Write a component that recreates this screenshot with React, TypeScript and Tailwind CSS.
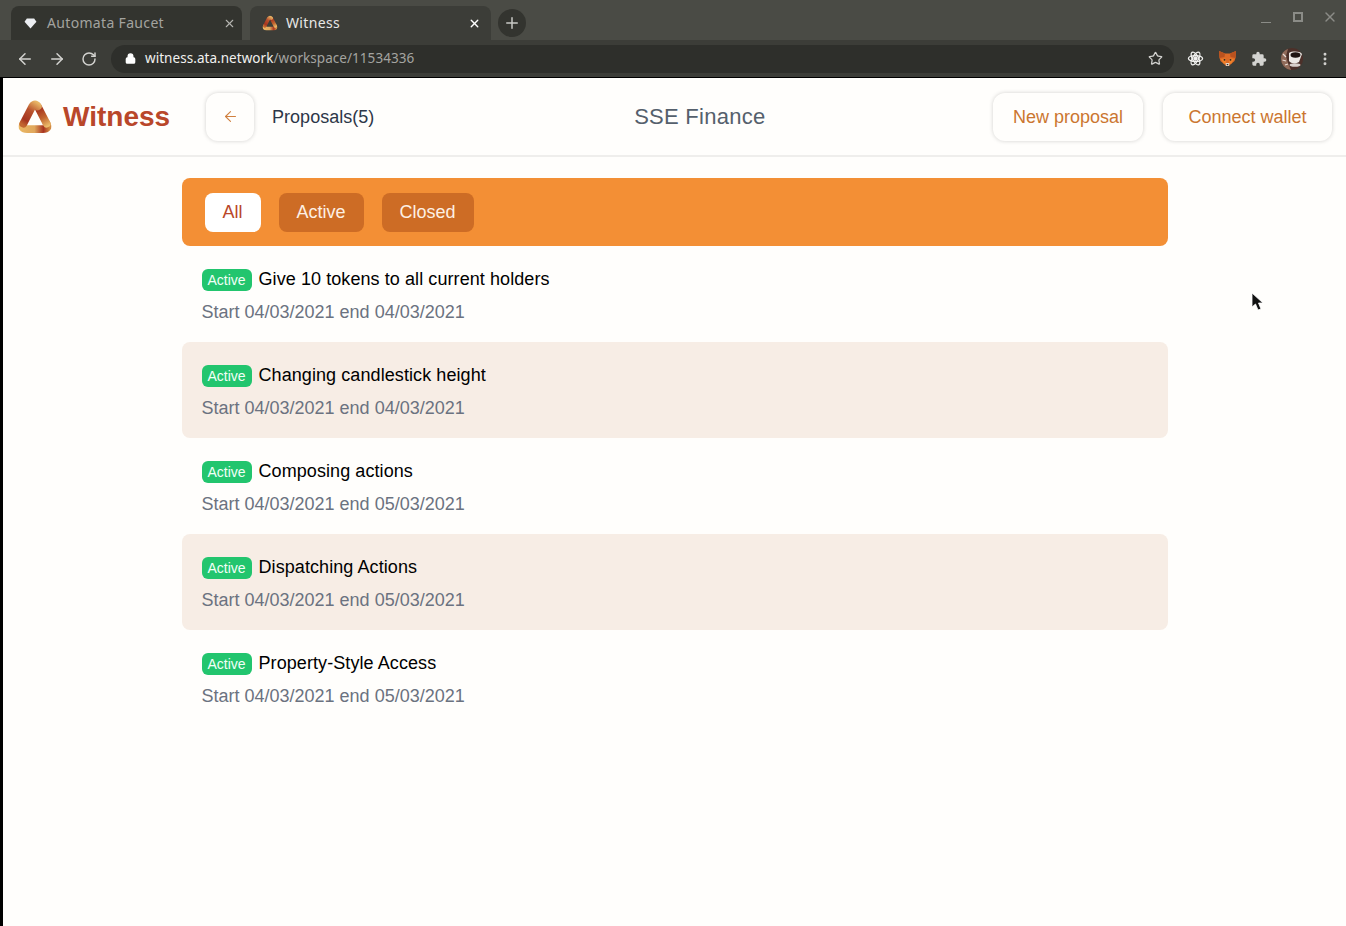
import React from 'react'
import {ArrowLeft, ArrowRight, Lock, MoreVertical, Plus, RotateCw, Star, X} from 'lucide-react'

const proposals = [
  {title: 'Give 10 tokens to all current holders', dates: 'Start 04/03/2021 end 04/03/2021'},
  {title: 'Changing candlestick height', dates: 'Start 04/03/2021 end 04/03/2021'},
  {title: 'Composing actions', dates: 'Start 04/03/2021 end 05/03/2021'},
  {title: 'Dispatching Actions', dates: 'Start 04/03/2021 end 05/03/2021'},
  {title: 'Property-Style Access', dates: 'Start 04/03/2021 end 05/03/2021'},
]

const Logo = ({size, id}: {size: number; id: string}) => (
  <svg width={size} height={size} viewBox="0 0 36 36">
    <defs>
      <linearGradient id={`${id}Left`} gradientUnits="userSpaceOnUse" x1="20" y1="5" x2="7" y2="25">
        <stop offset="0" stopColor="#e8b566" />
        <stop offset="0.4" stopColor="#b8502c" />
        <stop offset="0.8" stopColor="#a5351f" />
        <stop offset="1" stopColor="#c2652f" />
      </linearGradient>
      <linearGradient id={`${id}Right`} gradientUnits="userSpaceOnUse" x1="18" y1="5" x2="30" y2="26">
        <stop offset="0" stopColor="#dc9a4b" />
        <stop offset="0.3" stopColor="#a8351f" />
        <stop offset="0.65" stopColor="#c2652f" />
        <stop offset="1" stopColor="#ecbd6c" />
      </linearGradient>
      <linearGradient id={`${id}Bottom`} gradientUnits="userSpaceOnUse" x1="4" y1="28" x2="31" y2="28">
        <stop offset="0" stopColor="#eab763" />
        <stop offset="0.5" stopColor="#e0a75c" />
        <stop offset="0.8" stopColor="#a8331f" />
        <stop offset="1" stopColor="#d28a42" />
      </linearGradient>
    </defs>
    <path d="M7.5 24 Q5 29 11 29 L25 29 Q31 29 28.5 24" fill="none" stroke={`url(#${id}Bottom)`} strokeWidth="7" strokeLinecap="round" />
    <path d="M20.5 8.5 L28.5 24" fill="none" stroke={`url(#${id}Right)`} strokeWidth="7" strokeLinecap="round" />
    <path d="M20.5 8.5 Q18 5 15.5 8.5 L7.5 24" fill="none" stroke={`url(#${id}Left)`} strokeWidth="7" strokeLinecap="round" />
  </svg>
)

const Fox = () => (
  <svg width="17" height="17" viewBox="0 0 17 17">
    <path d="M0 1 L6 3.5 H11 L17 1 L16.5 8 L15.5 11 L12 14 L10 16 H7 L5 14 L1.5 11 L.5 8 Z" fill="#dc6a26" />
    <path d="M0 1 L6 3.5 L5.5 7 L.5 8 Z" fill="#b9521f" />
    <path d="M17 1 L11 3.5 L11.5 7 L16.5 8 Z" fill="#b9521f" />
    <path d="M2 9 L6.5 8.5 L7 13 L5 14 Z" fill="#f0812a" />
    <path d="M15 9 L10.5 8.5 L10 13 L12 14 Z" fill="#f0812a" />
    <path d="M6.5 13 H10.5 L10 16 H7 Z" fill="#e2d2c2" />
    <path d="M7.5 14 H9.5 L8.5 15.5 Z" fill="#2a2320" />
    <circle cx="5.5" cy="9.8" r="0.9" fill="#2a2320" />
    <circle cx="11.5" cy="9.8" r="0.9" fill="#2a2320" />
  </svg>
)

const Avatar = () => (
  <svg width="22" height="22" viewBox="0 0 22 22">
    <circle cx="11" cy="11" r="11" fill="#4c3029" />
    <path d="M0 11 A11 11 0 0 1 7 .8 L5 8 L7 15 L10 21.9 A11 11 0 0 1 0 11Z" fill="#8f6a59" />
    <path d="M2 6 L5 9 M1.5 12 L5 13 M4 17 L7 16" stroke="#e8dcd5" strokeWidth="1.2" />
    <path d="M8 5 C11 3 19 3 21 6 L18 14 C15 16 10 16 8 13 Z" fill="#ece8e4" />
    <ellipse cx="14.5" cy="7" rx="5" ry="2.8" fill="#1f1411" />
    <ellipse cx="14" cy="17" rx="5.5" ry="1.8" fill="#d8d0cb" />
  </svg>
)

const App = () => {
  return (
    <div className="flex flex-col h-[926px] bg-[#fffefc] overflow-hidden relative font-['Liberation_Sans',sans-serif]">
      {/* browser tabs */}
      <div className="h-10 shrink-0 bg-[#4a4b45] flex items-end pl-[11px] font-['Noto_Sans',sans-serif] text-sm tracking-[0.33px]">
        <div className="h-[34px] w-[231px] bg-[#33342f] rounded-t-lg flex items-center pl-[13px] pr-1.5 text-[#a3a39f]">
          <svg width="13" height="11" viewBox="0 0 14 12" className="mr-[10px]">
            <path d="M3 .5 H11 L13.5 4 L7 11.5 L.5 4 Z" fill="#eceef2" />
          </svg>
          <span className="flex-1">Automata Faucet</span>
          <X size={13} strokeWidth={2} className="text-[#b5b5b1]" />
        </div>
        <div className="h-[34px] w-[241px] ml-2 bg-[#3c3d38] rounded-t-lg flex items-center pl-[11px] pr-[10px] text-[#e8e8e6]">
          <Logo size={18} id="tabLogo" />
          <span className="flex-1 ml-[7px]">Witness</span>
          <X size={13} strokeWidth={2.5} className="text-white" />
        </div>
        <div className="w-[28px] h-[28px] ml-[7px] mb-[3px] rounded-full bg-[#33342f] flex items-center justify-center">
          <Plus size={18} className="text-[#c9c9c6]" />
        </div>
        <div className="ml-auto self-start flex items-center gap-[22px] pr-[11px] pt-[12px]">
          <div className="w-[10px] h-[10px] flex items-end"><div className="w-[10px] h-px bg-[#8b8c87] -mb-px" /></div>
          <div className="w-[10px] h-[10px] border-2 border-[#8b8c87]" />
          <div className="w-[10px] h-[10px] flex items-center justify-center">
            <X size={16} strokeWidth={2} className="text-[#8b8c87] shrink-0" />
          </div>
        </div>
      </div>

      {/* browser toolbar */}
      <div className="h-[38px] shrink-0 bg-[#3c3d38] border-b border-black flex items-center pl-4">
        <ArrowLeft size={18} strokeWidth={2} className="text-[#d3d3d0]" />
        <ArrowRight size={18} strokeWidth={2} className="text-[#d3d3d0] ml-[14px]" />
        <RotateCw size={16} strokeWidth={2.2} className="text-[#d3d3d0] ml-[15px]" />
        <div className="ml-[14px] w-[1063px] shrink-0 h-7 rounded-full bg-[#2e2f2b] flex items-center pl-3.5 pr-[11px] font-['Noto_Sans',sans-serif] text-[13.5px] tracking-[0.05px]">
          <Lock size={11} strokeWidth={3} fill="currentColor" className="text-white" />
          <span className="ml-[9px] text-[#f1f1ef]">witness.ata.network</span>
          <span className="text-[#a4a4a0]">/workspace/11534336</span>
          <Star size={15} strokeWidth={2} className="text-[#d3d3d0] ml-auto" />
        </div>
        <svg width="17" height="17" viewBox="0 0 24 24" fill="none" stroke="#f2f2f0" strokeWidth="1.8" className="ml-[13px]">
          <circle cx="12" cy="12" r="2.2" fill="#f2f2f0" />
          <ellipse cx="12" cy="12" rx="10" ry="4.2" />
          <ellipse cx="12" cy="12" rx="10" ry="4.2" transform="rotate(60 12 12)" />
          <ellipse cx="12" cy="12" rx="10" ry="4.2" transform="rotate(120 12 12)" />
        </svg>
        <div className="ml-[15px]"><Fox /></div>
        <svg width="16" height="16" viewBox="0 0 24 24" fill="#d3d3d0" className="ml-[15px]">
          <path d="M20.5 11H19V7a2 2 0 0 0-2-2h-4V3.5a2.5 2.5 0 0 0-5 0V5H4a2 2 0 0 0-2 2v3.8h1.5a2.7 2.7 0 0 1 0 5.4H2V20a2 2 0 0 0 2 2h3.8v-1.5a2.7 2.7 0 0 1 5.4 0V22H17a2 2 0 0 0 2-2v-4h1.5a2.5 2.5 0 0 0 0-5z" />
        </svg>
        <div className="ml-[14px]"><Avatar /></div>
        <MoreVertical size={16} strokeWidth={2.4} className="text-[#d3d3d0] ml-[14px]" />
      </div>

      <div className="flex flex-1 min-h-0">
        <div className="w-[3px] shrink-0 bg-black" />
        <div className="flex-1 min-w-0">
          {/* page header */}
          <header className="h-[79px] flex items-center pl-3 pr-[14px] border-b-2 border-[#efeeec]">
            <Logo size={40} id="pageLogo" />
            <span className="ml-2 text-[28px] font-bold text-[#b9472a]">Witness</span>
            <button className="ml-[36px] w-[48px] h-[48px] rounded-xl bg-[#fffefc] shadow-[0_0_4px_rgba(0,0,0,0.18)] flex items-center justify-center text-[#d0803f]">
              <ArrowLeft size={17} strokeWidth={1.5} />
            </button>
            <span className="ml-[18px] text-lg text-[#2d3748]">Proposals(5)</span>
            <span className="ml-[260px] text-[22px] tracking-[0.27px] text-[#55606c]">SSE Finance</span>
            <button className="ml-auto w-[150px] h-[48px] rounded-xl bg-[#fffefc] shadow-[0_0_4px_rgba(0,0,0,0.18)] text-lg text-[#cb7630]">New proposal</button>
            <button className="ml-5 w-[169px] h-[48px] rounded-xl bg-[#fffefc] shadow-[0_0_4px_rgba(0,0,0,0.18)] text-lg text-[#cb7630]">Connect wallet</button>
          </header>

          <main className="w-[986px] mx-auto mt-[21px]">
            <div className="h-[68px] rounded-lg bg-[#f38f35] flex items-center gap-[18px] pl-[23px] text-lg">
              <button className="h-[39px] w-[56px] rounded-lg bg-white text-[#b9472a]">All</button>
              <button className="h-[39px] w-[85px] rounded-lg bg-[#cd6c25] text-[#fdf0e4]">Active</button>
              <button className="h-[39px] w-[92px] rounded-lg bg-[#cd6c25] text-[#fdf0e4]">Closed</button>
            </div>
            {proposals.map((proposal, i) => (
              <div key={proposal.title} className={`h-24 rounded-lg px-5 pt-[21px] ${i % 2 === 1 ? 'bg-[#f7ede5]' : ''}`}>
                <div className="flex items-center h-6">
                  <span className="w-[50px] h-[22px] mt-0.5 rounded-md bg-[#22c56e] text-[#f2fff7] text-sm flex items-center justify-center">Active</span>
                  <span className="ml-[7px] text-lg tracking-[0.08px] text-black">{proposal.title}</span>
                </div>
                <div className="mt-[9px] h-6 leading-6 text-lg text-[#6b7280]">{proposal.dates}</div>
              </div>
            ))}
          </main>
        </div>
      </div>

      {/* mouse pointer */}
      <svg width="14" height="20" viewBox="0 0 14 20" className="absolute left-[1251px] top-[292px]">
        <path d="M1 1 V15 L4.5 12 L7 18 L10 17 L7.5 11 L12 11 Z" fill="#111" stroke="#fff" strokeWidth="0.8" />
      </svg>
    </div>
  )
}

export default React.memo(App)
